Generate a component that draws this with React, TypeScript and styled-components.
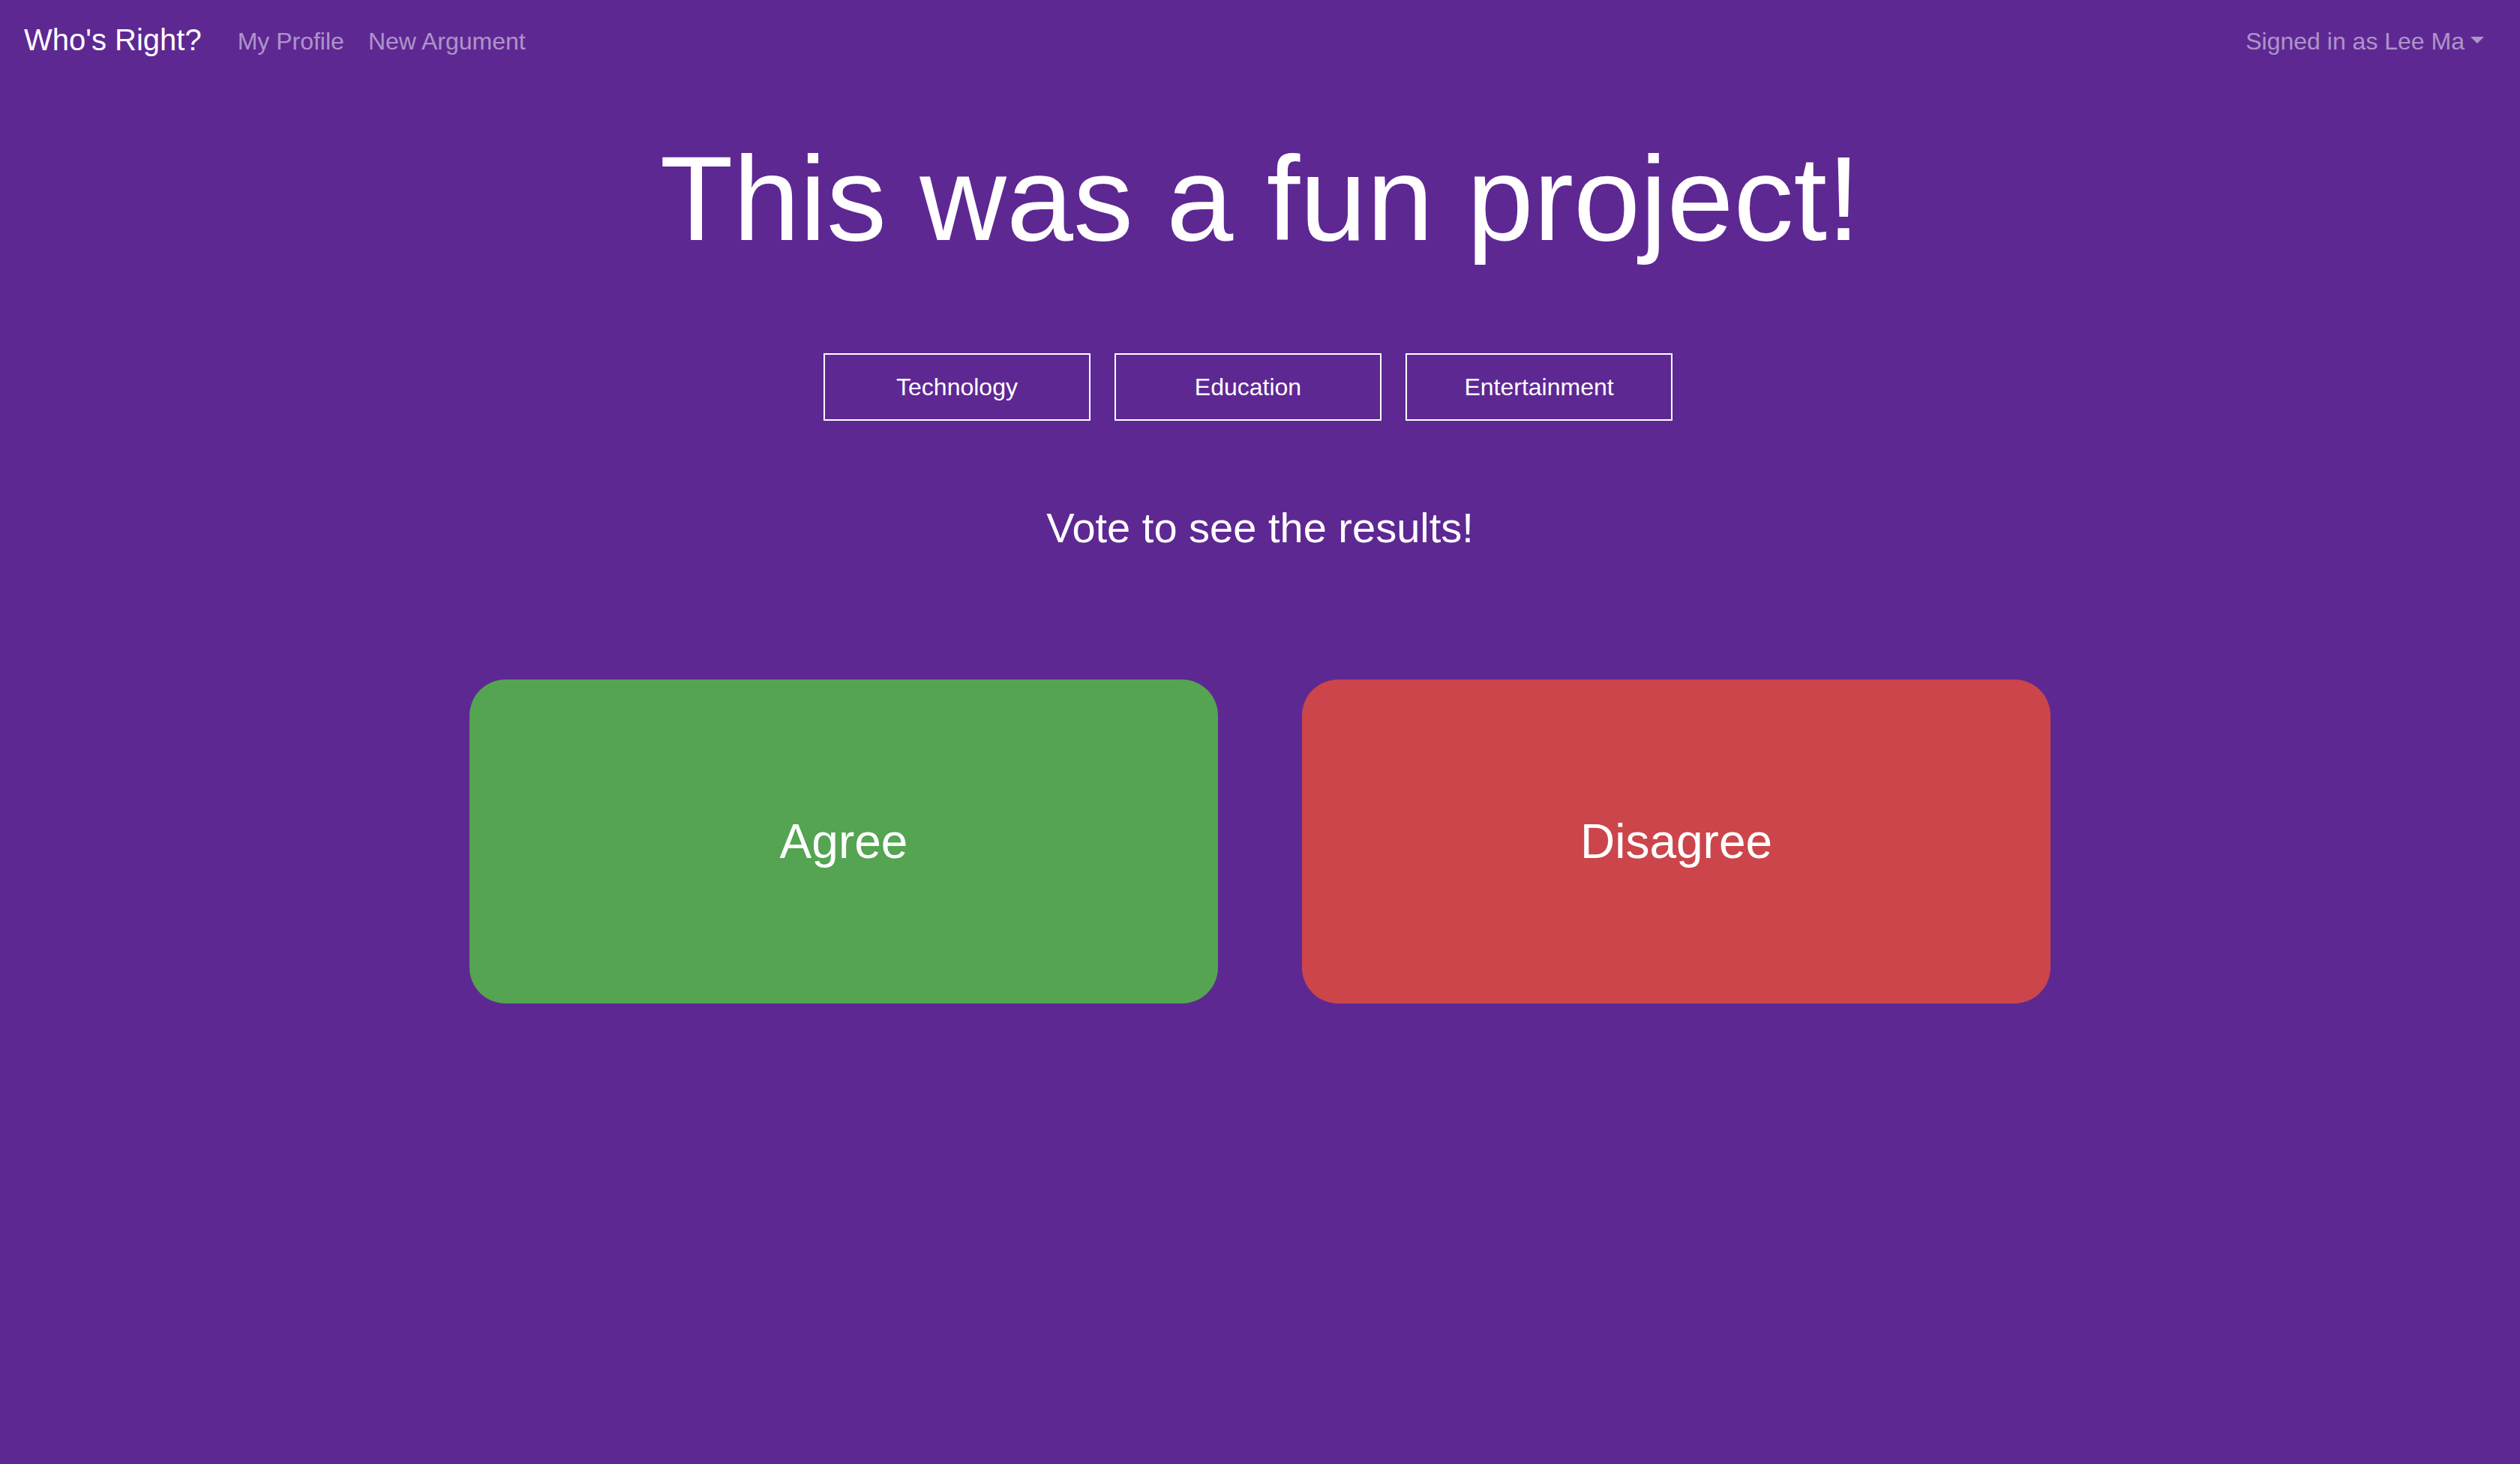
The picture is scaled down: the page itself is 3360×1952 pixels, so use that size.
import React from "react";
import styled, { createGlobalStyle } from "styled-components";

const GlobalStyle = createGlobalStyle`
  html, body {
    margin: 0;
    padding: 0;
    background: #5e2893;
    font-family: "Liberation Sans", Arial, Helvetica, sans-serif;
    color: #fff;
  }
  #root {
    min-height: 100vh;
  }
`;

const Page = styled.div`
  min-height: 100vh;
  background: #5e2893;
  display: flex;
  flex-direction: column;
`;

const Navbar = styled.nav`
  display: flex;
  align-items: center;
  height: 80px;
  padding: 13px 32px 19px;
`;

const Brand = styled.a`
  font-size: 40px;
  line-height: 60px;
  padding: 10px 0;
  margin-right: 32px;
  color: #fff;
  text-decoration: none;
  white-space: nowrap;
`;

const NavList = styled.div`
  display: flex;
  align-items: center;
  flex: 1;
`;

const NavLink = styled.a<{ $right?: boolean }>`
  font-size: 32px;
  line-height: 48px;
  padding: 18px 16px 14px;
  color: rgba(255, 255, 255, 0.5);
  text-decoration: none;
  white-space: nowrap;
  margin-left: ${(p) => (p.$right ? "auto" : "0")};
  display: inline-flex;
  align-items: center;
`;

const Caret = styled.span`
  display: inline-block;
  margin-left: 8px;
  width: 0;
  height: 0;
  border-top: 9.6px solid rgba(255, 255, 255, 0.5);
  border-left: 9.6px solid transparent;
  border-right: 9.6px solid transparent;
  transform: translateY(-2px);
`;

const Main = styled.main`
  display: flex;
  flex-direction: column;
  align-items: center;
`;

const Title = styled.h1`
  margin: 57px 0 0;
  font-size: 160px;
  line-height: 1.2;
  font-weight: 400;
  color: #fff;
  text-align: center;
`;

const Tags = styled.div`
  display: flex;
  justify-content: center;
  margin-top: 110px;
`;

const Tag = styled.button`
  width: 356px;
  height: 90px;
  margin-right: 32px;
  border: 2px solid #fff;
  border-radius: 0;
  background: transparent;
  color: #fff;
  font-family: "Liberation Sans", Arial, Helvetica, sans-serif;
  font-size: 32px;
  padding: 0;
  cursor: pointer;
`;

const Prompt = styled.h3`
  margin: 109px 0 0;
  font-size: 56px;
  line-height: 1.2;
  font-weight: 400;
  color: #fff;
  text-align: center;
`;

const VoteRow = styled.div`
  display: flex;
  justify-content: center;
  gap: 112px;
  margin-top: 169px;
`;

const VoteButton = styled.button<{ $color: string }>`
  width: 998px;
  height: 432px;
  border: none;
  border-radius: 48px;
  background: ${(p) => p.$color};
  color: #fff;
  font-family: "Liberation Sans", Arial, Helvetica, sans-serif;
  font-size: 64px;
  display: flex;
  align-items: center;
  justify-content: center;
  cursor: pointer;
`;

export default function App() {
  return (
    <Page>
      <GlobalStyle />
      <Navbar>
        <Brand href="#">Who's Right?</Brand>
        <NavList>
          <NavLink href="#">My Profile</NavLink>
          <NavLink href="#">New Argument</NavLink>
          <NavLink href="#" $right>
            Signed in as Lee Ma
            <Caret />
          </NavLink>
        </NavList>
      </Navbar>
      <Main>
        <Title>This was a fun project!</Title>
        <Tags>
          <Tag>Technology</Tag>
          <Tag>Education</Tag>
          <Tag>Entertainment</Tag>
        </Tags>
        <Prompt>Vote to see the results!</Prompt>
        <VoteRow>
          <VoteButton $color="#54a452">Agree</VoteButton>
          <VoteButton $color="#cb454b">Disagree</VoteButton>
        </VoteRow>
      </Main>
    </Page>
  );
}
